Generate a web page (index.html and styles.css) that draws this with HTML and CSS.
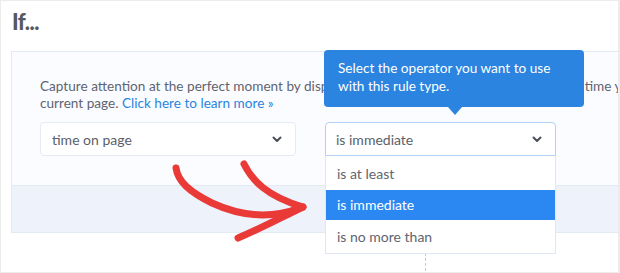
FILE: index.html
```html
<!DOCTYPE html>
<html lang="en">
  <head>
    <meta charset="UTF-8" />
    <title>Rule editor</title>
    <link rel="stylesheet" href="styles.css">
  </head>
  <body>
    <div class="frame">
      <h2 class="ruleTitle">If...</h2>

      <div class="panel">
        <div class="panelBody">
          <p class="hint">
            Capture attention at the perfect moment by displaying a campaign only after the amount of time you have spent on the<br>
            current page. <a href="#">Click here to learn more »</a>
          </p>

          <div class="row">
            <div class="select selectType">
              <span>time on page</span>
              <svg class="chevron" width="10" height="7" viewBox="0 0 10 7">
                <polyline points="1.5,1.5 5,5 8.5,1.5" />
              </svg>
            </div>

            <div class="selectWrap">
              <div class="select selectOperator">
                <span>is immediate</span>
                <svg class="chevron" width="10" height="7" viewBox="0 0 10 7">
                  <polyline points="1.5,1.5 5,5 8.5,1.5" />
                </svg>
              </div>

              <div class="tooltip">
                Select the operator you want to use with this rule type.
              </div>

              <ul class="options">
                <li>is at least</li>
                <li class="active">is immediate</li>
                <li>is no more than</li>
              </ul>
            </div>
          </div>
        </div>
        <div class="band"></div>
      </div>

      <div class="dash"></div>

      <!-- hand-drawn annotation arrows -->
      <svg class="arrows" width="620" height="273" viewBox="0 0 620 273">
        <path d="M176,168 C178,182 190,192 212,203 C238,215 268,220 300,208" />
        <path d="M244,164 C252,180 266,196 303,207" />
        <path d="M303,207 C280,218 262,228 238,238" />
      </svg>
    </div>
  </body>
</html>
```

FILE: styles.css
```css
* {
  margin: 0;
  padding: 0;
  box-sizing: border-box;
}

body {
  background: #ffffff;
  font-family: "Lato", "Open Sans", sans-serif;
  color: #5f6470;
}

.frame {
  position: relative;
  width: 620px;
  height: 273px;
  border: 1px solid #ececec;
  border-right-width: 2px;
  overflow: hidden;
}

.ruleTitle {
  font-size: 22px;
  font-weight: 900;
  color: #555a62;
  margin: 7px 0 0 11px;
  height: 43px;
  letter-spacing: -0.5px;
}

.panel {
  margin-left: 10px;
  border: 1px solid #e4eaf4;
  border-right: none;
  background: #fbfcff;
}

.panelBody {
  padding: 26px 0 29px 28px;
}

.hint {
  font-size: 13.6px;
  line-height: 17px;
  color: #5f6470;
  white-space: nowrap;
}

.hint a {
  color: #2a84e0;
  text-decoration: none;
}

.row {
  display: flex;
  gap: 29px;
  margin-top: 10px;
}

.select {
  height: 34px;
  border: 1px solid #e6ebf3;
  border-radius: 4px;
  background: #ffffff;
  display: flex;
  align-items: center;
  justify-content: space-between;
  padding: 0 13px 0 11px;
  font-size: 14px;
  color: #5a5f6a;
}

.selectType {
  width: 256px;
}

.selectWrap {
  position: relative;
  width: 231px;
}

.selectOperator {
  border-color: #b3d1f6;
  border-radius: 4px 4px 0 0;
  padding-left: 10px;
}

.chevron polyline {
  fill: none;
  stroke: #4a4f58;
  stroke-width: 2;
  stroke-linecap: round;
  stroke-linejoin: round;
}

.tooltip {
  position: absolute;
  left: -1px;
  bottom: 49px;
  width: 260px;
  height: 57px;
  background: #2a84e0;
  color: #ffffff;
  border-radius: 4px;
  padding: 9px 14px;
  font-size: 13.6px;
  line-height: 18px;
}

.tooltip::after {
  content: "";
  position: absolute;
  left: 124px;
  bottom: -8px;
  border-left: 7px solid transparent;
  border-right: 7px solid transparent;
  border-top: 8px solid #2a84e0;
}

.options {
  position: absolute;
  left: 0;
  top: 34px;
  width: 231px;
  list-style: none;
  background: #ffffff;
  border: 1px solid #dfe7f3;
  border-top: none;
  z-index: 2;
}

.options li {
  height: 34px;
  line-height: 36px;
  padding-left: 11px;
  font-size: 14px;
  color: #5f6470;
}

.options li.active {
  background: #2b87f2;
  color: #ffffff;
  height: 30px;
  line-height: 30px;
}

.options li:last-child {
  height: 33px;
  line-height: 33px;
}

.band {
  height: 47px;
  background: #edf2fb;
  border-top: 1px solid #e4eaf4;
}

.dash {
  width: 0;
  height: 18px;
  margin: 20px 0 0 424px;
  border-left: 1px dashed #c9c9c9;
}

.arrows {
  position: absolute;
  left: -1px;
  top: -1px;
  pointer-events: none;
  z-index: 3;
}

.arrows path {
  fill: none;
  stroke: #e93a37;
  stroke-width: 7;
  stroke-linecap: round;
  stroke-linejoin: round;
}
```
